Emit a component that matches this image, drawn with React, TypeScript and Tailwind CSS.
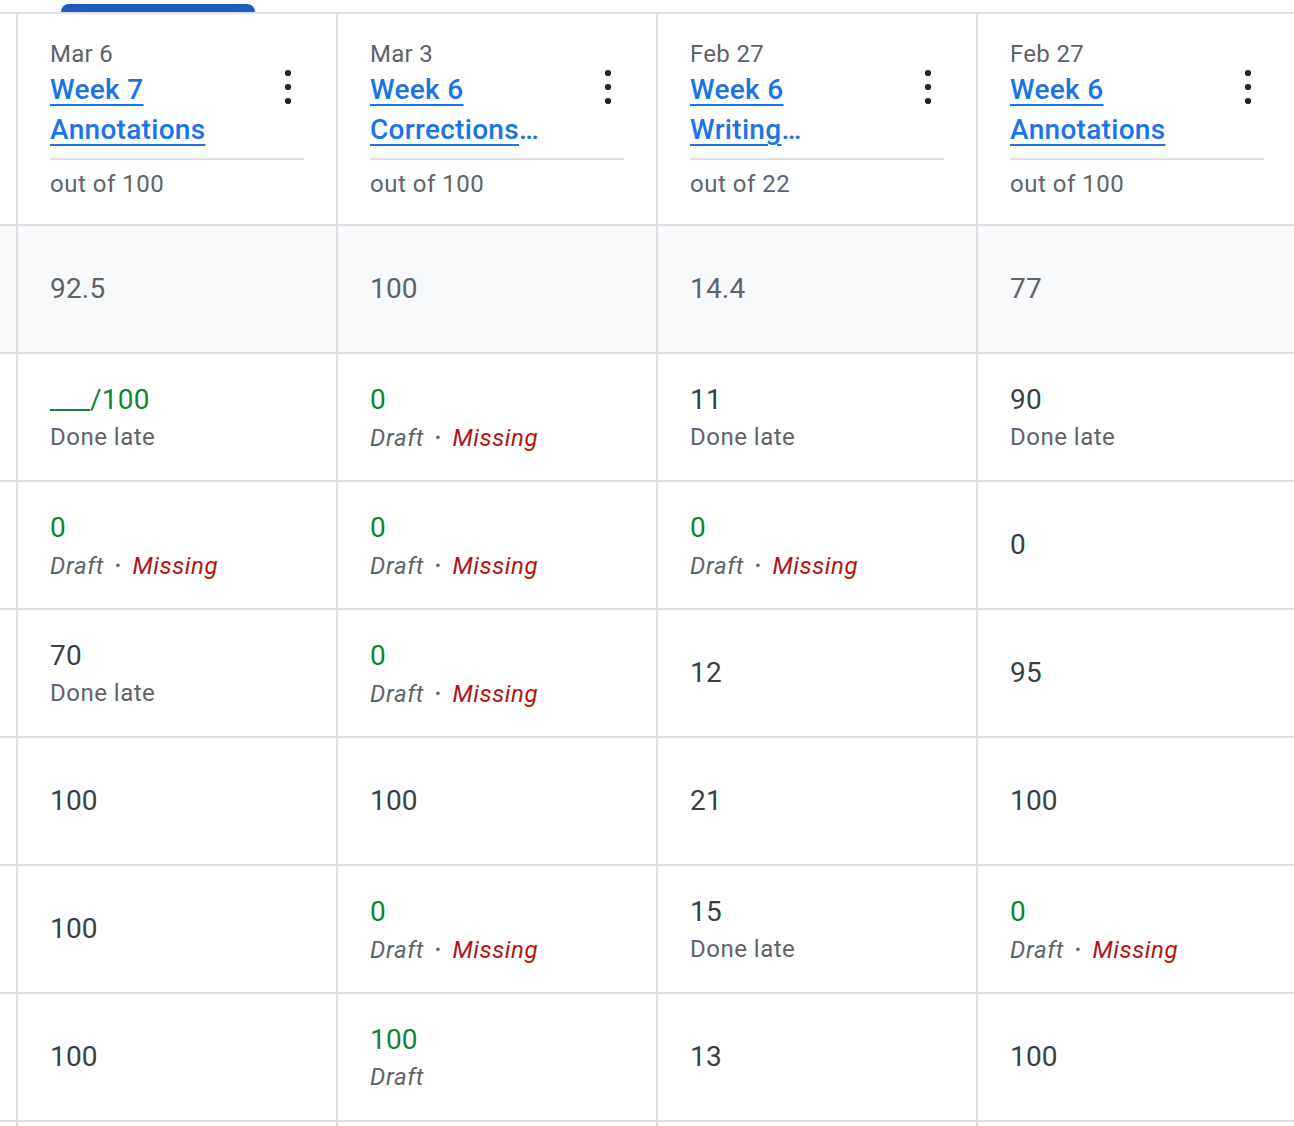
import React from "react";

type Cell = {
  v: string;
  green?: boolean;
  sub?: "late" | "dm" | "draft";
  blank?: boolean;
};

const headers = [
  { date: "Mar 6", title: "Week 7 Annotations", out: "out of 100" },
  { date: "Mar 3", title: "Week 6 Corrections Assignment", out: "out of 100" },
  { date: "Feb 27", title: "Week 6 Writing Assignment", out: "out of 22" },
  { date: "Feb 27", title: "Week 6 Annotations", out: "out of 100" },
];

const avg = ["92.5", "100", "14.4", "77"];

const rows: Cell[][] = [
  [
    { v: "100", blank: true, green: true, sub: "late" },
    { v: "0", green: true, sub: "dm" },
    { v: "11", sub: "late" },
    { v: "90", sub: "late" },
  ],
  [
    { v: "0", green: true, sub: "dm" },
    { v: "0", green: true, sub: "dm" },
    { v: "0", green: true, sub: "dm" },
    { v: "0" },
  ],
  [
    { v: "70", sub: "late" },
    { v: "0", green: true, sub: "dm" },
    { v: "12" },
    { v: "95" },
  ],
  [{ v: "100" }, { v: "100" }, { v: "21" }, { v: "100" }],
  [
    { v: "100" },
    { v: "0", green: true, sub: "dm" },
    { v: "15", sub: "late" },
    { v: "0", green: true, sub: "dm" },
  ],
  [
    { v: "100" },
    { v: "100", green: true, sub: "draft" },
    { v: "13" },
    { v: "100" },
  ],
];

const font = { fontFamily: "Roboto, 'Noto Sans', Arial, sans-serif" };

function Kebab() {
  return (
    <svg width="12" height="40" viewBox="0 0 12 40" className="block">
      <circle cx="6" cy="6" r="3.1" fill="#202124" />
      <circle cx="6" cy="20" r="3.1" fill="#202124" />
      <circle cx="6" cy="34" r="3.1" fill="#202124" />
    </svg>
  );
}

function DataCell({ c }: { c: Cell }) {
  const numColor = c.green ? "text-[#188038]" : "text-[#3c4043]";
  return (
    <div className="flex h-[126px] flex-col justify-center pl-[32px]">
      <div className={`text-[28px] leading-[40px] tracking-[0.2px] ${numColor}`}>
        {c.blank ? (
          <span className="flex items-baseline">
            <span className="mb-[9px] inline-block h-[2px] w-[40px] self-end bg-[#188038]" />
            <span>/{c.v}</span>
          </span>
        ) : (
          c.v
        )}
      </div>
      {c.sub === "late" && (
        <div className="text-[24px] leading-[34px] tracking-[0.5px] text-[#5f6368]">Done late</div>
      )}
      {c.sub === "dm" && (
        <div className="text-[24px] leading-[34px] tracking-[0.6px] text-[#5f6368] italic">
          Draft<span className="px-[11px] align-[3px] text-[17px] not-italic">•</span>
          <span className="text-[#b31412]">Missing</span>
        </div>
      )}
      {c.sub === "draft" && (
        <div className="text-[24px] leading-[34px] tracking-[0.6px] text-[#5f6368] italic">Draft</div>
      )}
    </div>
  );
}

export default function App() {
  return (
    <div className="h-[1126px] w-[1294px] overflow-hidden bg-white" style={font}>
      <div className="h-[12px] pt-[4px]">
        <div className="ml-[61px] h-[8px] w-[194px] rounded-t-[8px] bg-[#1a5cc0]" />
      </div>
      <div className="grid w-[1300px] grid-cols-[16px_320px_320px_320px_320px] border-t-2 border-[#dddfe2]">
        {/* header row */}
        <div className="h-[212px] border-b-2 border-[#dddfe2]" />
        {headers.map((h, i) => (
          <div key={i} className="h-[212px] border-b-2 border-l-2 border-[#dddfe2] pl-[32px] pr-[32px] pt-[25px]">
            <div className="text-[24px] leading-[30px] tracking-[0.3px] text-[#5f6368]">{h.date}</div>
            <div className="mt-[1px] flex items-start">
              <a className="line-clamp-2 flex-1 pr-[48px] text-[28px] font-medium leading-[40px] tracking-[0.3px] text-[#1a73e8] underline decoration-[2px] underline-offset-[5px]">
                {h.title}
              </a>
              <div className="mr-[6px] mt-[-3px] flex w-[20px] justify-center">
                <Kebab />
              </div>
            </div>
            <div className="mt-[8px] h-[2px] bg-[#dddfe2]" />
            <div className="mt-[9px] text-[24px] leading-[30px] tracking-[0.5px] text-[#5f6368]">{h.out}</div>
          </div>
        ))}
        {/* average row */}
        <div className="h-[128px] border-b-2 border-[#dddfe2] bg-[#f8f9fa]" />
        {avg.map((a, i) => (
          <div
            key={i}
            className="flex h-[128px] items-center border-b-2 border-l-2 border-[#dddfe2] bg-[#f8f9fa] pl-[32px] text-[28px] tracking-[0.2px] text-[#5f6368]"
          >
            {a}
          </div>
        ))}
        {rows.map((r, ri) => (
          <React.Fragment key={ri}>
            <div className="h-[128px] border-b-2 border-[#dddfe2]" />
            {r.map((c, ci) => (
              <div key={ci} className="h-[128px] border-b-2 border-l-2 border-[#dddfe2]">
                <DataCell c={c} />
              </div>
            ))}
          </React.Fragment>
        ))}
        <div className="h-[128px]" />
        {[0, 1, 2, 3].map((i) => (
          <div key={i} className="h-[128px] border-l-2 border-[#dddfe2]" />
        ))}
      </div>
    </div>
  );
}
